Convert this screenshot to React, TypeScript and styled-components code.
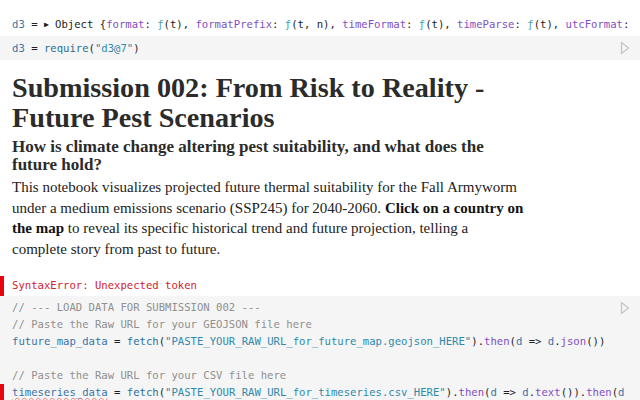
import React from "react";
import styled, { createGlobalStyle } from "styled-components";

const Global = createGlobalStyle`
  html, body { margin: 0; padding: 0; background: #fff; }
  body { width: 640px; height: 400px; overflow: hidden; }
`;

const mono = `"DejaVu Sans Mono", "Liberation Mono", monospace`;
const serif = `"Liberation Serif", "DejaVu Serif", serif`;

const Page = styled.div`
  display: flex;
  flex-direction: column;
  padding-top: 16px;
  color: #1b1e23;
`;

const Output = styled.div`
  font-family: ${mono};
  font-size: 10.6px;
  line-height: 17px;
  padding: 0 12px;
  white-space: pre;
  overflow: hidden;
  color: #1b1e23;
`;

const CodeCell = styled.div<{ $top?: number }>`
  position: relative;
  background: #f5f5f5;
  font-family: ${mono};
  font-size: 10.6px;
  line-height: 17px;
  padding: 3.5px 12px 3.5px;
  margin-top: ${(p) => p.$top ?? 0}px;
  white-space: pre;
  overflow: hidden;
  color: #1b1e23;
`;

const Line = styled.div`
  position: relative;
  height: 17px;
`;

const RunButton = styled.div`
  position: absolute;
  top: 5px;
  right: 9px;
  width: 12px;
  height: 14px;
  display: flex;
  align-items: center;
  justify-content: center;
`;

const Gutter = styled.span`
  position: absolute;
  left: -12px;
  top: 0;
  width: 4px;
  height: 17px;
  background: #e7040f;
`;

const Def = styled.span`color: #3b73a8;`;
const Fn = styled.span`color: #2a6f97;`;
const Str = styled.span`color: #2d8aab;`;
const Key = styled.span`color: #7e4fc4;`;
const FnSym = styled.span`color: #4aa3b5;`;
const Cm = styled.span`color: #8f8f8f;`;
const Wavy = styled.span`
  text-decoration: underline wavy rgba(231, 4, 15, 0.5);
  text-decoration-thickness: 0.7px;
  text-underline-offset: 0.5px;
`;

const Markdown = styled.div`
  padding: 0 12px;
  font-family: ${serif};
  color: #1b1e23;
`;

const Title = styled.h1`
  margin: 13px 0 0;
  font-size: 28.2px;
  line-height: 30px;
  font-weight: 700;
  color: #2b2b2b;
  max-width: 500px;
`;

const Subtitle = styled.h2`
  margin: 5px 0 0;
  font-size: 17px;
  line-height: 17.5px;
  font-weight: 700;
  color: #2b2b2b;
  max-width: 500px;
`;

const Para = styled.p`
  margin: 4px 0 0;
  font-size: 15px;
  line-height: 20.7px;
  white-space: nowrap;
  color: #222;
  b { font-weight: 700; color: #111; }
`;

const ErrorOut = styled.div`
  margin-top: 16px;
  border-left: 4px solid #e7040f;
  padding: 1.5px 8px;
  font-family: ${mono};
  font-size: 10.6px;
  line-height: 17px;
  color: #d0222e;
`;

const Tri = styled.span`
  font-size: 8px;
  vertical-align: 1px;
`;

function Play() {
  return (
    <svg width="10" height="14" viewBox="0 0 10 14">
      <path
        d="M1.5 1.5 L8.5 7 L1.5 12.5 Z"
        fill="none"
        stroke="#c8c8c8"
        strokeWidth="1.4"
        strokeLinejoin="round"
      />
    </svg>
  );
}

export default function App() {
  return (
    <>
      <Global />
      <Page>
        <Output>
          <Def>d3</Def> = <Tri>▶</Tri> Object {"{"}
          <Key>format</Key>: <FnSym>ƒ</FnSym>(t), <Key>formatPrefix</Key>:{" "}
          <FnSym>ƒ</FnSym>(t, n), <Key>timeFormat</Key>: <FnSym>ƒ</FnSym>(t),{" "}
          <Key>timeParse</Key>: <FnSym>ƒ</FnSym>(t), <Key>utcFormat</Key>:
        </Output>
        <CodeCell $top={3}>
          <Line>
            <Def>d3</Def> = <Fn>require</Fn>(<Str>"d3@7"</Str>)
          </Line>
          <RunButton>
            <Play />
          </RunButton>
        </CodeCell>
        <Markdown>
          <Title>Submission 002: From Risk to Reality - Future Pest Scenarios</Title>
          <Subtitle>
            How is climate change altering pest suitability, and what does the
            future hold?
          </Subtitle>
          <Para>
            This notebook visualizes projected future thermal suitability for
            the Fall Armyworm
            <br />
            under a medium emissions scenario (SSP245) for 2040-2060.{" "}
            <b>Click on a country on</b>
            <br />
            <b>the map</b> to reveal its specific historical trend and future
            projection, telling a<br />
            complete story from past to future.
          </Para>
        </Markdown>
        <ErrorOut>SyntaxError: Unexpected token</ErrorOut>
        <CodeCell>
          <Line>
            <Cm>// --- LOAD DATA FOR SUBMISSION 002 ---</Cm>
          </Line>
          <Line>
            <Cm>// Paste the Raw URL for your GEOJSON file here</Cm>
          </Line>
          <Line>
            <Def>future_map_data</Def> = <Fn>fetch</Fn>(
            <Str>"PASTE_YOUR_RAW_URL_for_future_map.geojson_HERE"</Str>).
            <Key>then</Key>(<Def>d</Def> =&gt; <Def>d</Def>.<Key>json</Key>())
          </Line>
          <Line />
          <Line>
            <Cm>// Paste the Raw URL for your CSV file here</Cm>
          </Line>
          <Line>
            <Gutter />
            <Wavy>
              <Def>timeseries_data</Def>
            </Wavy>{" "}
            = <Fn>fetch</Fn>(
            <Str>"PASTE_YOUR_RAW_URL_for_timeseries.csv_HERE"</Str>).
            <Key>then</Key>(<Def>d</Def> =&gt; <Def>d</Def>.<Key>text</Key>()).
            <Key>then</Key>(<Def>d</Def>
          </Line>
          <RunButton>
            <Play />
          </RunButton>
        </CodeCell>
      </Page>
    </>
  );
}
